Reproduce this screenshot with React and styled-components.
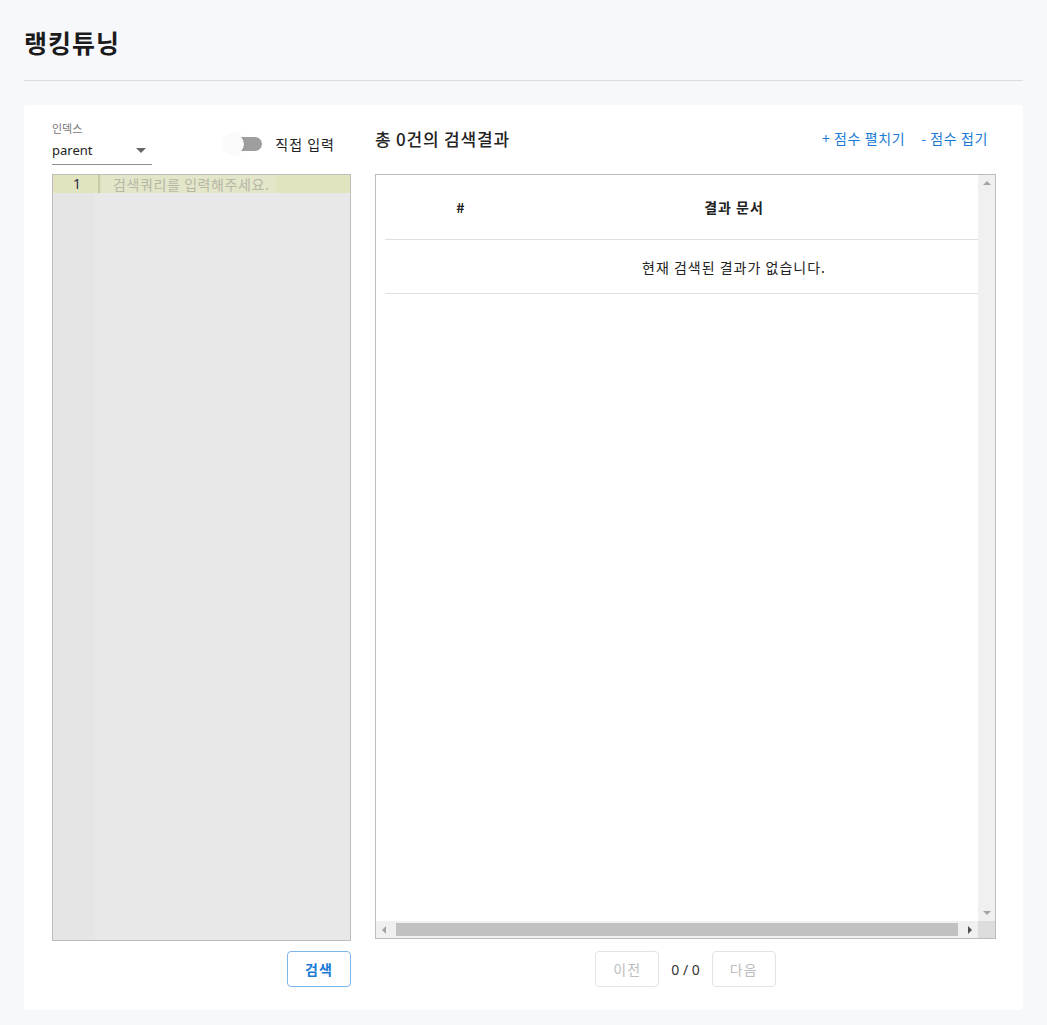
import React from 'react';
import styled, { createGlobalStyle } from 'styled-components';

const colors = {
  page: '#f7f8fc',
  text: '#222',
  muted: '#777',
  line: '#dcdcdc',
  blue: '#1a7bd6',
  frame: '#bdbdbd',
};

const GlobalStyle = createGlobalStyle`
  body {
    margin: 0;
    padding: 0;
    background: ${colors.page};
    font-family: 'Noto Sans', 'Noto Sans CJK KR', sans-serif;
    color: ${colors.text};
  }
`;

const Page = styled.main`
  padding: 24px 24px 0;
  box-sizing: border-box;
  min-height: 1025px;
`;

const PageTitle = styled.h1`
  margin: 0;
  font-family: 'Noto Sans CJK KR', sans-serif;
  font-size: 25px;
  letter-spacing: 1px;
  font-weight: 700;
  line-height: 36px;
  padding-bottom: 20px;
  border-bottom: 1px solid ${colors.line};
  color: #1b1b1b;
`;

const Card = styled.section`
  margin-top: 24px;
  background: #fff;
  border-radius: 4px;
  padding: 16px 27px 23px 28px;
  display: flex;
  gap: 24px;
  height: 905px;
  box-sizing: border-box;
`;

const LeftColumn = styled.div`
  width: 299px;
  display: flex;
  flex-direction: column;
`;

const RightColumn = styled.div`
  flex: 1;
  display: flex;
  flex-direction: column;
`;

const LeftHeader = styled.div`
  display: flex;
  justify-content: space-between;
  align-items: flex-start;
  height: 53px;
`;

const Field = styled.div`
  display: flex;
  flex-direction: column;
  width: 100px;
`;

const FieldLabel = styled.label`
  font-family: 'Noto Sans CJK KR', sans-serif;
  font-size: 11px;
  line-height: 14px;
  color: ${colors.muted};
`;

const SelectBox = styled.div`
  height: 30px;
  display: flex;
  align-items: center;
  justify-content: space-between;
  border-bottom: 1px solid #8e8e8e;
  font-size: 13px;
  color: #222;
  padding-right: 6px;
  box-sizing: border-box;
`;

const Caret = styled.span`
  width: 0;
  height: 0;
  border-left: 5px solid transparent;
  border-right: 5px solid transparent;
  border-top: 5px solid #666;
  margin-top: 2px;
`;

const ToggleWrap = styled.div`
  display: flex;
  align-items: center;
  gap: 13px;
  margin-top: 13px;
  margin-right: 16px;
`;

const Switch = styled.span`
  display: inline-flex;
  align-items: center;
  width: 38px;
  height: 20px;
  position: relative;
`;

const Track = styled.span`
  width: 28px;
  height: 14px;
  margin-left: 10px;
  border-radius: 7px;
  background: #9e9e9e;
`;

const Thumb = styled.span`
  position: absolute;
  left: 0;
  top: 0;
  width: 20px;
  height: 20px;
  border-radius: 50%;
  background: #fafafa;
  box-shadow: 0 0 4px rgba(0, 0, 0, 0.06);
`;

const ToggleLabel = styled.span`
  font-family: 'Noto Sans CJK KR', sans-serif;
  font-size: 14px;
  letter-spacing: 1px;
  color: #222;
`;

const Editor = styled.div`
  height: 767px;
  border: 1px solid ${colors.frame};
  background: #e8e8e8;
  box-sizing: border-box;
  display: flex;
  flex-direction: column;
  background-image: linear-gradient(to right, #e5e5e5 0 42px, transparent 42px);
`;

const EditorLine = styled.div`
  display: flex;
  height: 18px;
  background: #e1e4bf;
  font-size: 14px;
  line-height: 18px;
`;

const LineNumber = styled.span`
  width: 47px;
  padding-right: 17px;
  box-sizing: border-box;
  text-align: right;
  color: #2a2a4a;
  border-right: 2px solid #c9cba8;
`;

const Placeholder = styled.span`
  margin-left: 2px;
  padding: 0 6px 0 11px;
  background: #e4e6c9;
  color: #b6b8a6;
  letter-spacing: 0.6px;
  font-family: 'Noto Sans CJK KR', sans-serif;
`;

const ButtonRow = styled.div`
  display: flex;
  justify-content: ${({ center }) => (center ? 'center' : 'flex-end')};
  align-items: center;
  gap: 12px;
  margin-top: ${({ top }) => top}px;
`;

const Button = styled.button`
  width: 64px;
  height: 36px;
  border-radius: 4px;
  background: #fff;
  font-family: 'Noto Sans CJK KR', sans-serif;
  font-size: 14px;
  letter-spacing: 1px;
  font-weight: ${({ primary }) => (primary ? 700 : 400)};
  border: 1px solid ${({ primary }) => (primary ? '#7cb6ee' : '#e2e2e2')};
  color: ${({ primary }) => (primary ? colors.blue : '#bdbdbd')};
  cursor: pointer;
`;

const PageCount = styled.span`
  font-size: 14px;
  color: #333;
`;

const RightHeader = styled.div`
  display: flex;
  justify-content: space-between;
  align-items: center;
  height: 34px;
  margin-bottom: 19px;
  padding-right: 8px;
`;

const ResultTitle = styled.h2`
  margin: 0;
  font-family: 'Noto Sans CJK KR', sans-serif;
  font-size: 17px;
  letter-spacing: 0.8px;
  font-weight: 500;
  color: #222;
`;

const Links = styled.div`
  display: flex;
  gap: 16px;
`;

const TextLink = styled.a`
  font-family: 'Noto Sans CJK KR', sans-serif;
  font-size: 14px;
  letter-spacing: 0.6px;
  color: ${colors.blue};
  text-decoration: none;
  cursor: pointer;
`;

const TableFrame = styled.div`
  height: 765px;
  border: 1px solid ${colors.frame};
  box-sizing: border-box;
  display: grid;
  grid-template-columns: 1fr 17px;
  grid-template-rows: 1fr 17px;
`;

const TableArea = styled.div`
  padding: 0 0 0 9px;
`;

const Table = styled.table`
  width: 100%;
  border-collapse: collapse;
  font-family: 'Noto Sans CJK KR', sans-serif;
  font-size: 14px;
  letter-spacing: 1px;
`;

const Th = styled.th`
  height: 62px;
  padding: 1px;
  font-weight: 700;
  color: #222;
  border-bottom: 1px solid #e0e0e0;
  width: ${({ w }) => w || 'auto'};
`;

const Td = styled.td`
  height: 51px;
  padding: 1px;
  text-align: center;
  color: #222;
  border-bottom: 1px solid #e0e0e0;
`;

const ScrollTrack = styled.div`
  background: #f0f0f0;
  display: flex;
  flex-direction: ${({ horizontal }) => (horizontal ? 'row' : 'column')};
  align-items: center;
  justify-content: space-between;
`;

const ScrollThumb = styled.div`
  flex: 1;
  height: 13px;
  background: #c1c1c1;
  margin: 0 4px;
`;

const Corner = styled.div`
  background: #dcdcdc;
`;

const Arrow = styled.span`
  width: 0;
  height: 0;
  margin: 6px;
  ${({ dir, color }) => {
    const c = color || '#a3a3a3';
    if (dir === 'up') return `border-left:4px solid transparent;border-right:4px solid transparent;border-bottom:4px solid ${c};`;
    if (dir === 'down') return `border-left:4px solid transparent;border-right:4px solid transparent;border-top:4px solid ${c};`;
    if (dir === 'left') return `border-top:4px solid transparent;border-bottom:4px solid transparent;border-right:4px solid ${c};`;
    return `border-top:4px solid transparent;border-bottom:4px solid transparent;border-left:4px solid ${c};`;
  }}
`;

export default function App() {
  return (
    <>
      <GlobalStyle />
      <Page>
        <PageTitle>랭킹튜닝</PageTitle>
        <Card>
          <LeftColumn>
            <LeftHeader>
              <Field>
                <FieldLabel>인덱스</FieldLabel>
                <SelectBox>
                  parent
                  <Caret />
                </SelectBox>
              </Field>
              <ToggleWrap>
                <Switch>
                  <Track />
                  <Thumb />
                </Switch>
                <ToggleLabel>직접 입력</ToggleLabel>
              </ToggleWrap>
            </LeftHeader>
            <Editor>
              <EditorLine>
                <LineNumber>1</LineNumber>
                <Placeholder>검색쿼리를 입력해주세요.</Placeholder>
              </EditorLine>
            </Editor>
            <ButtonRow top={10}>
              <Button primary>검색</Button>
            </ButtonRow>
          </LeftColumn>

          <RightColumn>
            <RightHeader>
              <ResultTitle>총 0건의 검색결과</ResultTitle>
              <Links>
                <TextLink>+ 점수 펼치기</TextLink>
                <TextLink>- 점수 접기</TextLink>
              </Links>
            </RightHeader>
            <TableFrame>
              <TableArea>
                <Table>
                  <thead>
                    <tr>
                      <Th w="150px">#</Th>
                      <Th>결과 문서</Th>
                      <Th w="45px" />
                    </tr>
                  </thead>
                  <tbody>
                    <tr>
                      <Td />
                      <Td>현재 검색된 결과가 없습니다.</Td>
                      <Td />
                    </tr>
                  </tbody>
                </Table>
              </TableArea>
              <ScrollTrack>
                <Arrow dir="up" />
                <Arrow dir="down" />
              </ScrollTrack>
              <ScrollTrack horizontal>
                <Arrow dir="left" />
                <ScrollThumb />
                <Arrow dir="right" color="#505050" />
              </ScrollTrack>
              <Corner />
            </TableFrame>
            <ButtonRow center top={12}>
              <Button>이전</Button>
              <PageCount>0 / 0</PageCount>
              <Button>다음</Button>
            </ButtonRow>
          </RightColumn>
        </Card>
      </Page>
    </>
  );
}
